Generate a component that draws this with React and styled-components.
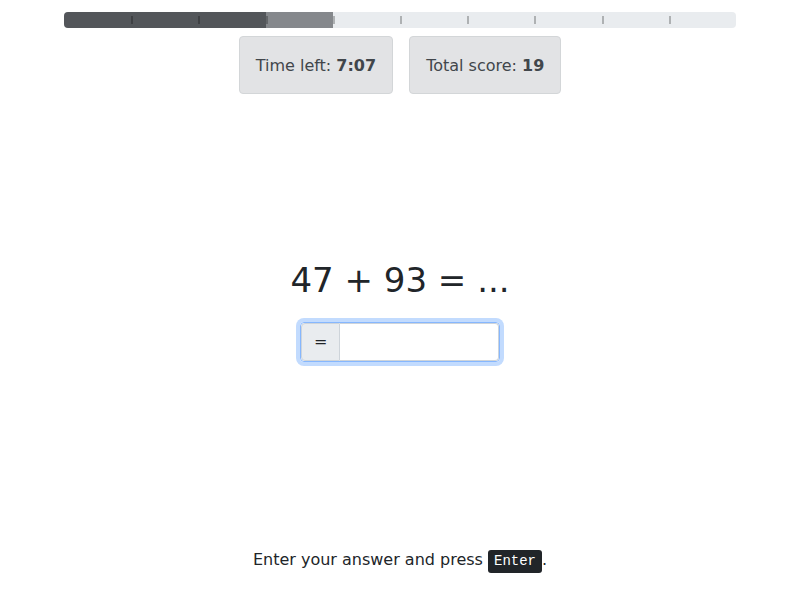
import React from "react";
import styled, { createGlobalStyle } from "styled-components";

const Global = createGlobalStyle`
  *, *::before, *::after { box-sizing: border-box; }
  body {
    margin: 0;
    background: #fff;
    color: #212529;
    font: 16px/24px "DejaVu Sans", sans-serif;
  }
`;

const Page = styled.main`
  min-height: 100vh;
  display: flex;
  flex-direction: column;
  align-items: center;
  padding: 12px 0 28px;
`;

const Progress = styled.div`
  display: flex;
  width: 84%;
  height: 16px;
  border-radius: 4px;
  overflow: hidden;
  background: #e9ecef;
`;

const fills = { done: "#53565a", current: "#85888c", todo: "transparent" };

const Step = styled.div`
  flex: 1;
  display: flex;
  align-items: center;
  background: ${({ $state }) => fills[$state]};

  &:not(:first-child)::before {
    content: "";
    width: 2px;
    height: 8px;
    background: rgba(0, 0, 0, 0.25);
  }
`;

const Stats = styled.div`
  display: flex;
  gap: 16px;
  margin-top: 8px;
`;

const Stat = styled.div`
  padding: 17px 16px 15px;
  border: 1px solid #d3d6d8;
  border-radius: 4px;
  background: #e2e3e5;
  color: #41464b;
`;

const Exercise = styled.form`
  flex: 1;
  display: flex;
  flex-direction: column;
  align-items: center;
  justify-content: center;
  gap: 20px;
  padding-bottom: 22px;
`;

const Question = styled.label`
  font-size: 34px;
  line-height: 44px;
`;

const AnswerGroup = styled.div`
  display: flex;
  width: 200px;
  height: 40px;
  border: 1px solid #86b7fe;
  border-radius: 4px;

  &:focus-within {
    box-shadow: 0 0 0 4px #c2dbfe;
  }
`;

const Prefix = styled.span`
  display: flex;
  align-items: center;
  padding: 0 12px;
  border: 1px solid #ced4da;
  border-radius: 4px 0 0 4px;
  background: #e9ecef;
`;

const Answer = styled.input`
  flex: 1;
  min-width: 0;
  padding: 6px 12px;
  border: 1px solid #ced4da;
  border-left: 0;
  border-radius: 0 4px 4px 0;
  background: #fff;
  color: inherit;
  font: inherit;
  outline: 0;
  caret-color: transparent;
`;

const Hint = styled.p`
  margin: 0;
`;

const Key = styled.kbd`
  padding: 3px 6px 4px;
  border-radius: 3px;
  background: #212529;
  color: #fff;
  font: 14px "Liberation Mono", monospace;
`;

const steps = Array.from({ length: 10 }, (_, i) =>
  i < 3 ? "done" : i === 3 ? "current" : "todo"
);

export default function App() {
  return (
    <>
      <Global />
      <Page>
        <Progress role="progressbar" aria-label="Exercises" aria-valuemin={0} aria-valuemax={10} aria-valuenow={3}>
          {steps.map((state, i) => (
            <Step key={i} $state={state} />
          ))}
        </Progress>
        <Stats>
          <Stat>Time left: <strong>7:07</strong></Stat>
          <Stat>Total score: <strong>19</strong></Stat>
        </Stats>
        <Exercise onSubmit={(e) => e.preventDefault()}>
          <Question htmlFor="answer">47 + 93 = ...</Question>
          <AnswerGroup>
            <Prefix>=</Prefix>
            <Answer id="answer" type="text" autoComplete="off" autoFocus />
          </AnswerGroup>
        </Exercise>
        <Hint>Enter your answer and press <Key>Enter</Key>.</Hint>
      </Page>
    </>
  );
}
